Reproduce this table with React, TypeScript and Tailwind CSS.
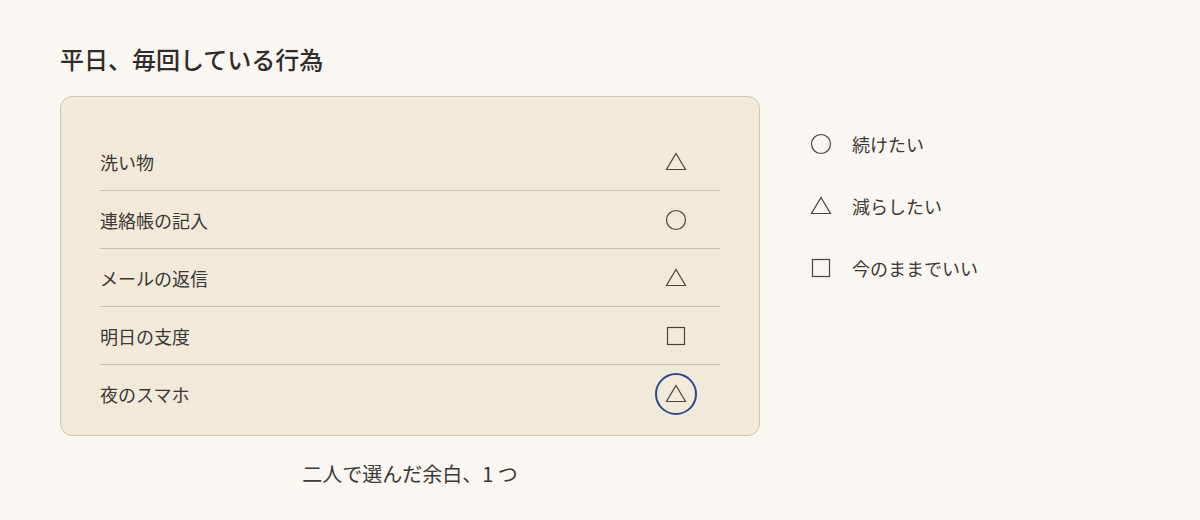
import React from "react";

type Mark = "circle" | "triangle" | "square";

const items: { label: string; mark: Mark; picked?: boolean }[] = [
  { label: "洗い物", mark: "triangle" },
  { label: "連絡帳の記入", mark: "circle" },
  { label: "メールの返信", mark: "triangle" },
  { label: "明日の支度", mark: "square" },
  { label: "夜のスマホ", mark: "triangle", picked: true },
];

const legend: { label: string; mark: Mark }[] = [
  { label: "続けたい", mark: "circle" },
  { label: "減らしたい", mark: "triangle" },
  { label: "今のままでいい", mark: "square" },
];

function MarkIcon({ mark }: { mark: Mark }) {
  return (
    <svg width="22" height="22" viewBox="0 0 22 22" fill="none" stroke="#4a4440" strokeWidth="1.2">
      {mark === "circle" && <circle cx="11" cy="11" r="9.5" />}
      {mark === "triangle" && <path d="M11 2.5 L20.5 18.5 L1.5 18.5 Z" strokeLinejoin="miter" />}
      {mark === "square" && <rect x="2.5" y="2.5" width="17" height="17" />}
    </svg>
  );
}

export default function App() {
  return (
    <div
      className="w-[1200px] h-[520px] bg-[#faf6f1] text-[#3b3835] px-[60px] pt-[42px]"
      style={{ fontFamily: '"Noto Sans CJK JP", "Noto Sans", sans-serif' }}
    >
      <h1 className="text-[24px] font-medium leading-[34px] text-[#2f2c29]">平日、毎回している行為</h1>
      <div className="flex mt-[20px]">
        <div className="w-[700px] shrink-0">
          <div className="rounded-[12px] border border-[#cfc5b4] bg-[#f1e9da] px-[39px] pt-[36px] pb-[12px]">
            {items.map((it, i) => (
              <div
                key={it.label}
                className={
                  "flex items-center justify-between h-[58px] " +
                  (i < items.length - 1 ? "border-b border-[#c9c0b3]" : "")
                }
              >
                <span className="text-[18px] leading-none">{it.label}</span>
                <div className="w-[88px] flex justify-center">
                  {it.picked ? (
                    <div className="w-[42px] h-[42px] rounded-full border-2 border-[#2e4a8c] flex items-center justify-center">
                      <MarkIcon mark={it.mark} />
                    </div>
                  ) : (
                    <MarkIcon mark={it.mark} />
                  )}
                </div>
              </div>
            ))}
          </div>
          <p className="text-center text-[20px] mt-[28px] leading-none">二人で選んだ余白、1 つ</p>
        </div>
        <div className="ml-[50px] pt-[37px] flex flex-col gap-[40px]">
          {legend.map((l) => (
            <div key={l.label} className="flex items-center h-[22px]">
              <MarkIcon mark={l.mark} />
              <span className="ml-[20px] text-[18px] leading-none">{l.label}</span>
            </div>
          ))}
        </div>
      </div>
    </div>
  );
}
